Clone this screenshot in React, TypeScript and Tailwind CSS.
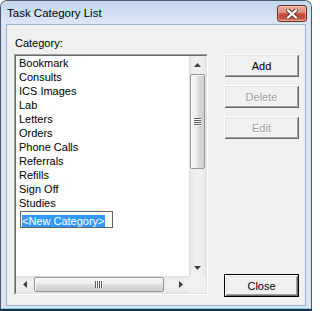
import React from "react";

const items = [
  "Bookmark",
  "Consults",
  "ICS Images",
  "Lab",
  "Letters",
  "Orders",
  "Phone Calls",
  "Referrals",
  "Refills",
  "Sign Off",
  "Studies",
];

function WinButton({
  label,
  disabled,
  isDefault,
}: {
  label: string;
  disabled?: boolean;
  isDefault?: boolean;
}) {
  if (isDefault) {
    return (
      <div className="h-[23px] w-[75px] border border-black">
        <div className="flex h-full w-full items-center justify-center bg-[#f0f0f0] text-[11px] leading-[14px] text-black shadow-[inset_1px_1px_0_#ffffff,inset_-1px_-1px_0_#696969,inset_2px_2px_0_#e3e3e3,inset_-2px_-2px_0_#a0a0a0]">
          {label}
        </div>
      </div>
    );
  }
  return (
    <div
      className={
        disabled
          ? "flex h-[23px] w-[75px] items-center justify-center bg-[#f0f0f0] text-[11px] leading-[14px] text-[#a0a0a0] [text-shadow:1px_1px_0_#ffffff] shadow-[inset_1px_1px_0_#ffffff,inset_-1px_-1px_0_#696969,inset_2px_2px_0_#e3e3e3,inset_-2px_-2px_0_#a0a0a0]"
          : "flex h-[23px] w-[75px] items-center justify-center bg-[#f0f0f0] text-[11px] leading-[14px] text-black shadow-[inset_1px_1px_0_#ffffff,inset_-1px_-1px_0_#696969,inset_2px_2px_0_#e3e3e3,inset_-2px_-2px_0_#a0a0a0]"
      }
    >
      {label}
    </div>
  );
}

function VGrip() {
  return (
    <svg width="7" height="8" viewBox="0 0 7 8">
      <rect x="0" y="0" width="7" height="1" fill="#5b5b5b" />
      <rect x="0" y="1" width="7" height="1" fill="#fafafa" />
      <rect x="0" y="2" width="7" height="1" fill="#5b5b5b" />
      <rect x="0" y="3" width="7" height="1" fill="#fafafa" />
      <rect x="0" y="4" width="7" height="1" fill="#5b5b5b" />
      <rect x="0" y="5" width="7" height="1" fill="#fafafa" />
      <rect x="0" y="6" width="7" height="1" fill="#5b5b5b" />
      <rect x="0" y="7" width="7" height="1" fill="#fafafa" />
    </svg>
  );
}

function HGrip() {
  return (
    <svg width="8" height="7" viewBox="0 0 8 7">
      <rect x="0" y="0" width="1" height="7" fill="#5b5b5b" />
      <rect x="1" y="0" width="1" height="7" fill="#fafafa" />
      <rect x="2" y="0" width="1" height="7" fill="#5b5b5b" />
      <rect x="3" y="0" width="1" height="7" fill="#fafafa" />
      <rect x="4" y="0" width="1" height="7" fill="#5b5b5b" />
      <rect x="5" y="0" width="1" height="7" fill="#fafafa" />
      <rect x="6" y="0" width="1" height="7" fill="#5b5b5b" />
      <rect x="7" y="0" width="1" height="7" fill="#fafafa" />
    </svg>
  );
}

function VScroll() {
  return (
    <div className="flex h-full w-[17px] flex-col bg-[linear-gradient(to_right,#dcdcdc,#ececec_15%,#f1f1f1_50%,#ececec_85%,#e2e2e2)]">
      <div className="flex h-[17px] shrink-0 items-center justify-center">
        <svg width="7" height="4" viewBox="0 0 7 4">
          <path d="M3.5 0 L7 4 L0 4 Z" fill="#404040" />
        </svg>
      </div>
      <div className="flex-1">
        <div className="mx-[1px] mt-[1px] flex h-[95px] items-center justify-center rounded-[2px] border border-[#959595] bg-[linear-gradient(to_right,#f6f6f6,#ececec_45%,#dcdcdc_55%,#cfcfcf)] shadow-[inset_1px_1px_0_#ffffff]">
          <VGrip />
        </div>
      </div>
      <div className="flex h-[17px] shrink-0 items-center justify-center">
        <svg width="7" height="4" viewBox="0 0 7 4">
          <path d="M0 0 L7 0 L3.5 4 Z" fill="#404040" />
        </svg>
      </div>
    </div>
  );
}

function HScroll() {
  return (
    <div className="flex h-[17px] w-full bg-[linear-gradient(to_bottom,#dcdcdc,#ececec_15%,#f1f1f1_50%,#ececec_85%,#e2e2e2)]">
      <div className="flex w-[17px] shrink-0 items-center justify-center">
        <svg width="4" height="7" viewBox="0 0 4 7">
          <path d="M0 3.5 L4 0 L4 7 Z" fill="#404040" />
        </svg>
      </div>
      <div className="flex-1">
        <div className="my-[1px] ml-[1px] flex h-[15px] w-[130px] items-center justify-center rounded-[2px] border border-[#959595] bg-[linear-gradient(to_bottom,#f6f6f6,#ececec_45%,#dcdcdc_55%,#cfcfcf)] shadow-[inset_1px_1px_0_#ffffff]">
          <HGrip />
        </div>
      </div>
      <div className="flex w-[17px] shrink-0 items-center justify-center">
        <svg width="4" height="7" viewBox="0 0 4 7">
          <path d="M0 0 L4 3.5 L0 7 Z" fill="#404040" />
        </svg>
      </div>
    </div>
  );
}

export default function App() {
  return (
    <div className="h-[311px] w-[312px] overflow-hidden bg-white font-['Liberation_Sans',Arial,sans-serif]">
      <div className="flex h-full w-full flex-col rounded-t-[7px] border border-b-2 border-[#4b5866] border-b-[#1e3247] bg-[#d9e5f3]">
        {/* Title bar */}
        <div className="flex h-[23px] shrink-0 items-start justify-between rounded-t-[6px] bg-[linear-gradient(to_bottom,#c3d6ed,#d3e1f2_60%,#dae6f4)] pl-[6px] pr-[4px]">
          <span className="pt-[5px] text-[11.5px] leading-[14px] text-black">
            Task Category List
          </span>
          <div className="mt-[4px] flex h-[17px] w-[30px] items-center justify-center rounded-[3px] border border-[#6b2a24] bg-[linear-gradient(to_bottom,#e8ab9e_0%,#dc8e7e_45%,#c4493a_52%,#c4483a_75%,#d8806b_100%)] shadow-[inset_0_0_0_1px_rgba(255,220,210,0.45)]">
            <svg width="12" height="10" viewBox="0 0 12 10">
              <path
                d="M2 1.5 L10 8.5 M10 1.5 L2 8.5"
                stroke="#5a3a36"
                strokeWidth="4"
                strokeLinecap="square"
              />
              <path
                d="M2 1.5 L10 8.5 M10 1.5 L2 8.5"
                stroke="#ffffff"
                strokeWidth="2.2"
                strokeLinecap="square"
              />
            </svg>
          </div>
        </div>

        {/* Client area */}
        <div className="mx-[5px] h-[282px] shrink-0 border border-[#9fb3cb] bg-[#f0f0f0] pl-[7px] pt-[11px] text-[11px] text-black">
          <div className="ml-[1px] h-[14px] leading-[14px]">Category:</div>
          <div className="mt-[4px] flex items-start">
            {/* Listbox */}
            <div className="h-[241px] w-[194px] border border-t-[#a0a0a0] border-l-[#a0a0a0] border-b-white border-r-white">
              <div className="grid h-full w-full grid-cols-[1fr_17px] grid-rows-[1fr_17px] border border-t-[#696969] border-l-[#696969] border-b-[#e3e3e3] border-r-[#e3e3e3] bg-white">
                <div className="overflow-hidden pl-[3px]">
                  {items.map((it) => (
                    <div key={it} className="h-[14px] whitespace-nowrap leading-[14px]">
                      {it}
                    </div>
                  ))}
                  <div className="ml-[1px] mt-[1px] h-[17px] w-[93px] border border-[#646464] bg-white pl-[1px] pt-[1px]">
                    <span className="inline-block h-[12px] whitespace-nowrap bg-[#3399ff] leading-[12px] text-white">
                      &lt;New Category&gt;
                    </span>
                  </div>
                </div>
                <VScroll />
                <HScroll />
                <div className="bg-[#f0f0f0]" />
              </div>
            </div>

            {/* Buttons */}
            <div className="ml-[16px] flex h-[243px] flex-col">
              <WinButton label="Add" />
              <div className="mt-[8px]">
                <WinButton label="Delete" disabled />
              </div>
              <div className="mt-[8px]">
                <WinButton label="Edit" disabled />
              </div>
              <div className="mt-auto">
                <WinButton label="Close" isDefault />
              </div>
            </div>
          </div>
        </div>
        <div className="h-[2px] shrink-0" />
        <div className="h-[1px] shrink-0 bg-[#7ccbf0]" />
      </div>
    </div>
  );
}
